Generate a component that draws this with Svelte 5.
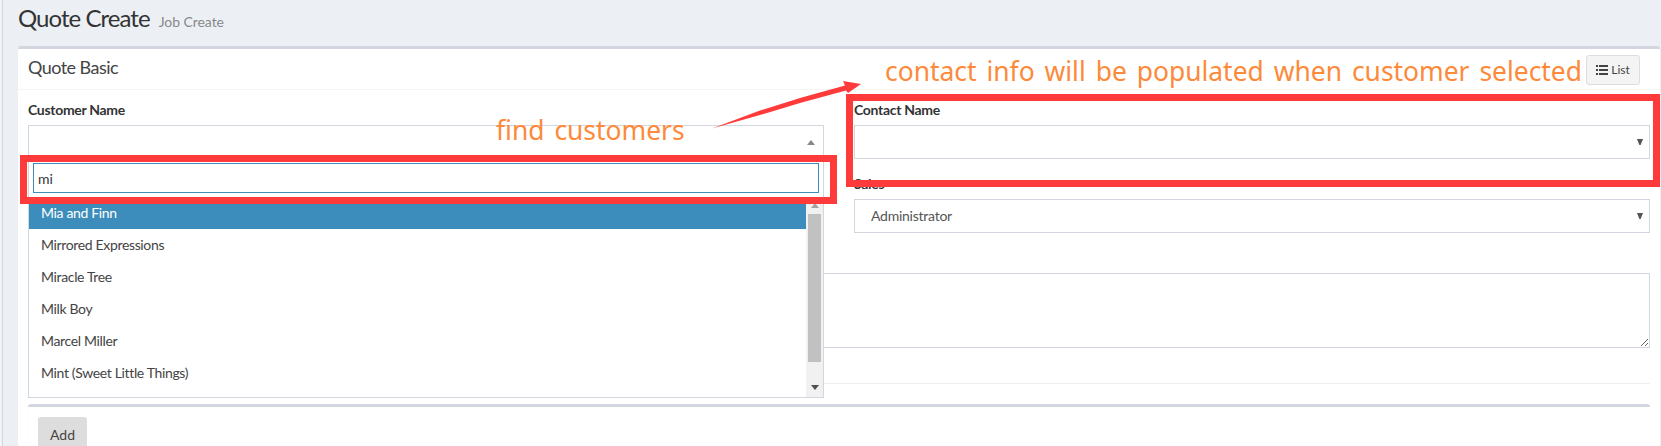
<script>
  const options = ['Mia and Finn', 'Mirrored Expressions', 'Miracle Tree', 'Milk Boy', 'Marcel Miller', 'Mint (Sweet Little Things)'];
</script>

<div class="page">
  <header class="page-head">
    <h1>Quote Create</h1>
    <small>Job Create</small>
  </header>

  <section class="card">
    <div class="card-head">
      <h3>Quote Basic</h3>
      <button class="btn-list">
        <svg width="12" height="10" viewBox="0 0 12 10" aria-hidden="true">
          <path d="M0 0h2v2H0zM3 0h9v2H3zM0 4h2v2H0zM3 4h9v2H3zM0 8h2v2H0zM3 8h9v2H3z" fill="#444" />
        </svg>
        List
      </button>
    </div>

    <div class="card-body">
      <div class="cols">
        <div class="col">
          <div class="field customer">
            <span class="label">Customer Name</span>
            <div class="select open">
              <span></span>
              <svg width="8" height="5" viewBox="0 0 8 5"><path d="M0 5L4 0l4 5z" fill="#888" /></svg>
            </div>
            <div class="dropdown">
              <div class="search"><input value="mi" /></div>
              <div class="results">
                <ul>
                  {#each options as o, i}
                    <li class:active={i === 0}>{o}</li>
                  {/each}
                </ul>
                <div class="scrollbar">
                  <svg class="sb-arrow" width="8" height="5" viewBox="0 0 8 5"><path d="M0 5L4 0l4 5z" fill="#a3a3a3" /></svg>
                  <div class="thumb"></div>
                  <svg class="sb-arrow" width="8" height="5" viewBox="0 0 8 5"><path d="M0 0h8L4 5z" fill="#505050" /></svg>
                </div>
              </div>
            </div>
          </div>
        </div>
        <div class="col">
          <div class="field">
            <span class="label">Contact Name</span>
            <div class="select">
              <span></span>
              <svg width="6" height="6" viewBox="0 0 6 6"><path d="M0 0h6L3.6 6H2.4z" fill="#555" /></svg>
            </div>
          </div>
          <div class="field">
            <span class="label">Sales</span>
            <div class="select">
              <span class="value">Administrator</span>
              <svg width="6" height="6" viewBox="0 0 6 6"><path d="M0 0h6L3.6 6H2.4z" fill="#555" /></svg>
            </div>
          </div>
        </div>
      </div>
      <textarea class="notes"></textarea>
      <hr />
      <section class="sub-card">
        <button class="btn-add">Add</button>
      </section>
    </div>
  </section>

  <div class="mark mark-search"></div>
  <div class="mark mark-contact"></div>
  <svg class="arrow" width="1661" height="446" viewBox="0 0 1661 446" aria-hidden="true">
    <path d="M712 128.500L760 110.500 800 98 845 85.500 843 81 861 84 848 93 846 90.500 800 103 760 115z" fill="#fe3a3a" />
  </svg>
  <span class="note note-find">find customers</span>
  <span class="note note-contact">contact info will be populated when customer selected</span>
</div>

<style>
  :global(body) {
    margin: 0;
    background: #f1f3f7;
  }
  .page {
    position: relative;
    box-sizing: border-box;
    height: 446px;
    overflow: hidden;
    background: #ecf0f5;
    border-left: 1px solid #d2d6de;
    margin-left: 2px;
    padding-left: 15px;
    padding-right: 1px;
    font-family: "Lato", sans-serif;
    font-size: 14px;
    color: #333;
  }
  .page-head {
    display: flex;
    align-items: baseline;
    gap: 9px;
    height: 46px;
    padding-top: 3px;
    box-sizing: border-box;
  }
  h1 {
    margin: 0;
    font-size: 24px;
    font-weight: 400;
    line-height: 30px;
    color: #333;
    letter-spacing: -0.95px;
  }
  small {
    font-size: 14px;
    color: #888;
    letter-spacing: -0.05px;
  }
  .card {
    background: #fff;
    border-top: 3px solid #d2d6de;
    border-radius: 3px;
    box-sizing: border-box;
    height: 420px;
  }
  .card-head {
    box-sizing: border-box;
    height: 41px;
    display: flex;
    align-items: center;
    justify-content: space-between;
    padding: 0 20px 0 10px;
    border-bottom: 1px solid #f4f4f4;
  }
  h3 {
    margin: 0;
    font-size: 18px;
    font-weight: 400;
    color: #444;
    letter-spacing: -0.55px;
    position: relative;
    top: -2px;
  }
  .btn-list {
    display: flex;
    align-items: center;
    gap: 3px;
    width: 54px;
    height: 30px;
    padding: 0;
    justify-content: center;
    margin-top: 1px;
    background: #f4f4f4;
    border: 1px solid #ddd;
    border-radius: 3px;
    font: 12px "Lato", sans-serif;
    color: #444;
  }
  .card-body {
    padding: 10px 10px 0;
  }
  .cols {
    display: grid;
    grid-template-columns: 796px 796px;
    column-gap: 30px;
  }
  .field {
    margin-bottom: 15px;
  }
  .customer {
    position: relative;
  }
  .label {
    display: block;
    height: 20px;
    line-height: 20px;
    margin-bottom: 5px;
    font-weight: 700;
    letter-spacing: -0.3px;
    color: #333;
  }
  .select {
    box-sizing: border-box;
    height: 34px;
    border: 1px solid #d2d6de;
    display: flex;
    align-items: center;
    justify-content: space-between;
    padding: 0 6px 0 16px;
    background: #fff;
  }
  .select.open {
    padding-right: 8px;
  }
  .value {
    color: #555;
    letter-spacing: -0.25px;
    padding-bottom: 2px;
  }
  .dropdown {
    position: absolute;
    left: 0;
    right: 0;
    top: 59px;
    z-index: 2;
    box-sizing: border-box;
    height: 239px;
    background: #fff;
    border: 1px solid #d2d6de;
    border-top: 0;
  }
  .search {
    height: 38px;
    box-sizing: border-box;
    padding: 4px;
  }
  .search input {
    display: block;
    box-sizing: border-box;
    width: 100%;
    height: 30px;
    margin: 0;
    padding: 0 4px;
    border: 1px solid #3c8dbc;
    outline: none;
    font: 14px "Lato", sans-serif;
    color: #333;
  }
  .results {
    display: flex;
    height: 200px;
    overflow: hidden;
  }
  ul {
    flex: 1;
    list-style: none;
    margin: 0;
    padding: 0;
  }
  li {
    height: 32px;
    line-height: 32px;
    padding-left: 12px;
    color: #444;
    letter-spacing: -0.35px;
  }
  li.active {
    background: #3c8dbc;
    color: #fff;
  }
  .scrollbar {
    width: 17px;
    background: #f1f1f1;
    display: flex;
    flex-direction: column;
    align-items: center;
    padding-top: 6px;
    box-sizing: border-box;
  }
  .thumb {
    width: 13px;
    height: 148px;
    margin: 6px 0 23px;
    background: #c1c1c1;
  }
  .notes {
    display: block;
    box-sizing: border-box;
    width: 1622px;
    height: 75px;
    margin: 25px 0 0;
    padding: 6px 12px;
    border: 1px solid #d2d6de;
    background: #fff;
    outline: none;
  }
  hr {
    margin: 35px 0 20px;
    border: 0;
    border-top: 1px solid #eee;
    width: 1622px;
  }
  .sub-card {
    width: 1622px;
    box-sizing: border-box;
    height: 60px;
    border-top: 3px solid #d2d6de;
    border-radius: 3px;
    padding: 10px;
    background: #fff;
    box-shadow: 0 1px 1px rgba(0, 0, 0, 0.1);
  }
  .btn-add {
    display: block;
    width: 49px;
    height: 34px;
    padding: 0;
    background: #ddd;
    border: 0;
    border-radius: 3px;
    font: 14px "Lato", sans-serif;
    color: #444;
  }
  .mark {
    position: absolute;
    box-sizing: border-box;
    border: 7px solid #fe3a3a;
    pointer-events: none;
    z-index: 3;
  }
  .mark-search {
    left: 17px;
    top: 155px;
    width: 817px;
    height: 49px;
  }
  .mark-contact {
    left: 843px;
    top: 94px;
    width: 814px;
    height: 93px;
  }
  .arrow {
    position: absolute;
    left: -3px;
    top: 0;
    pointer-events: none;
    z-index: 4;
  }
  .note {
    position: absolute;
    z-index: 5;
    font-family: "Noto Sans", sans-serif;
    font-size: 26.4px;
    line-height: 34px;
    word-spacing: 3.1px;
    color: #fd8a3a;
    white-space: nowrap;
  }
  .note-find {
    left: 493px;
    top: 113px;
  }
  .note-contact {
    left: 882px;
    top: 54px;
  }
</style>
